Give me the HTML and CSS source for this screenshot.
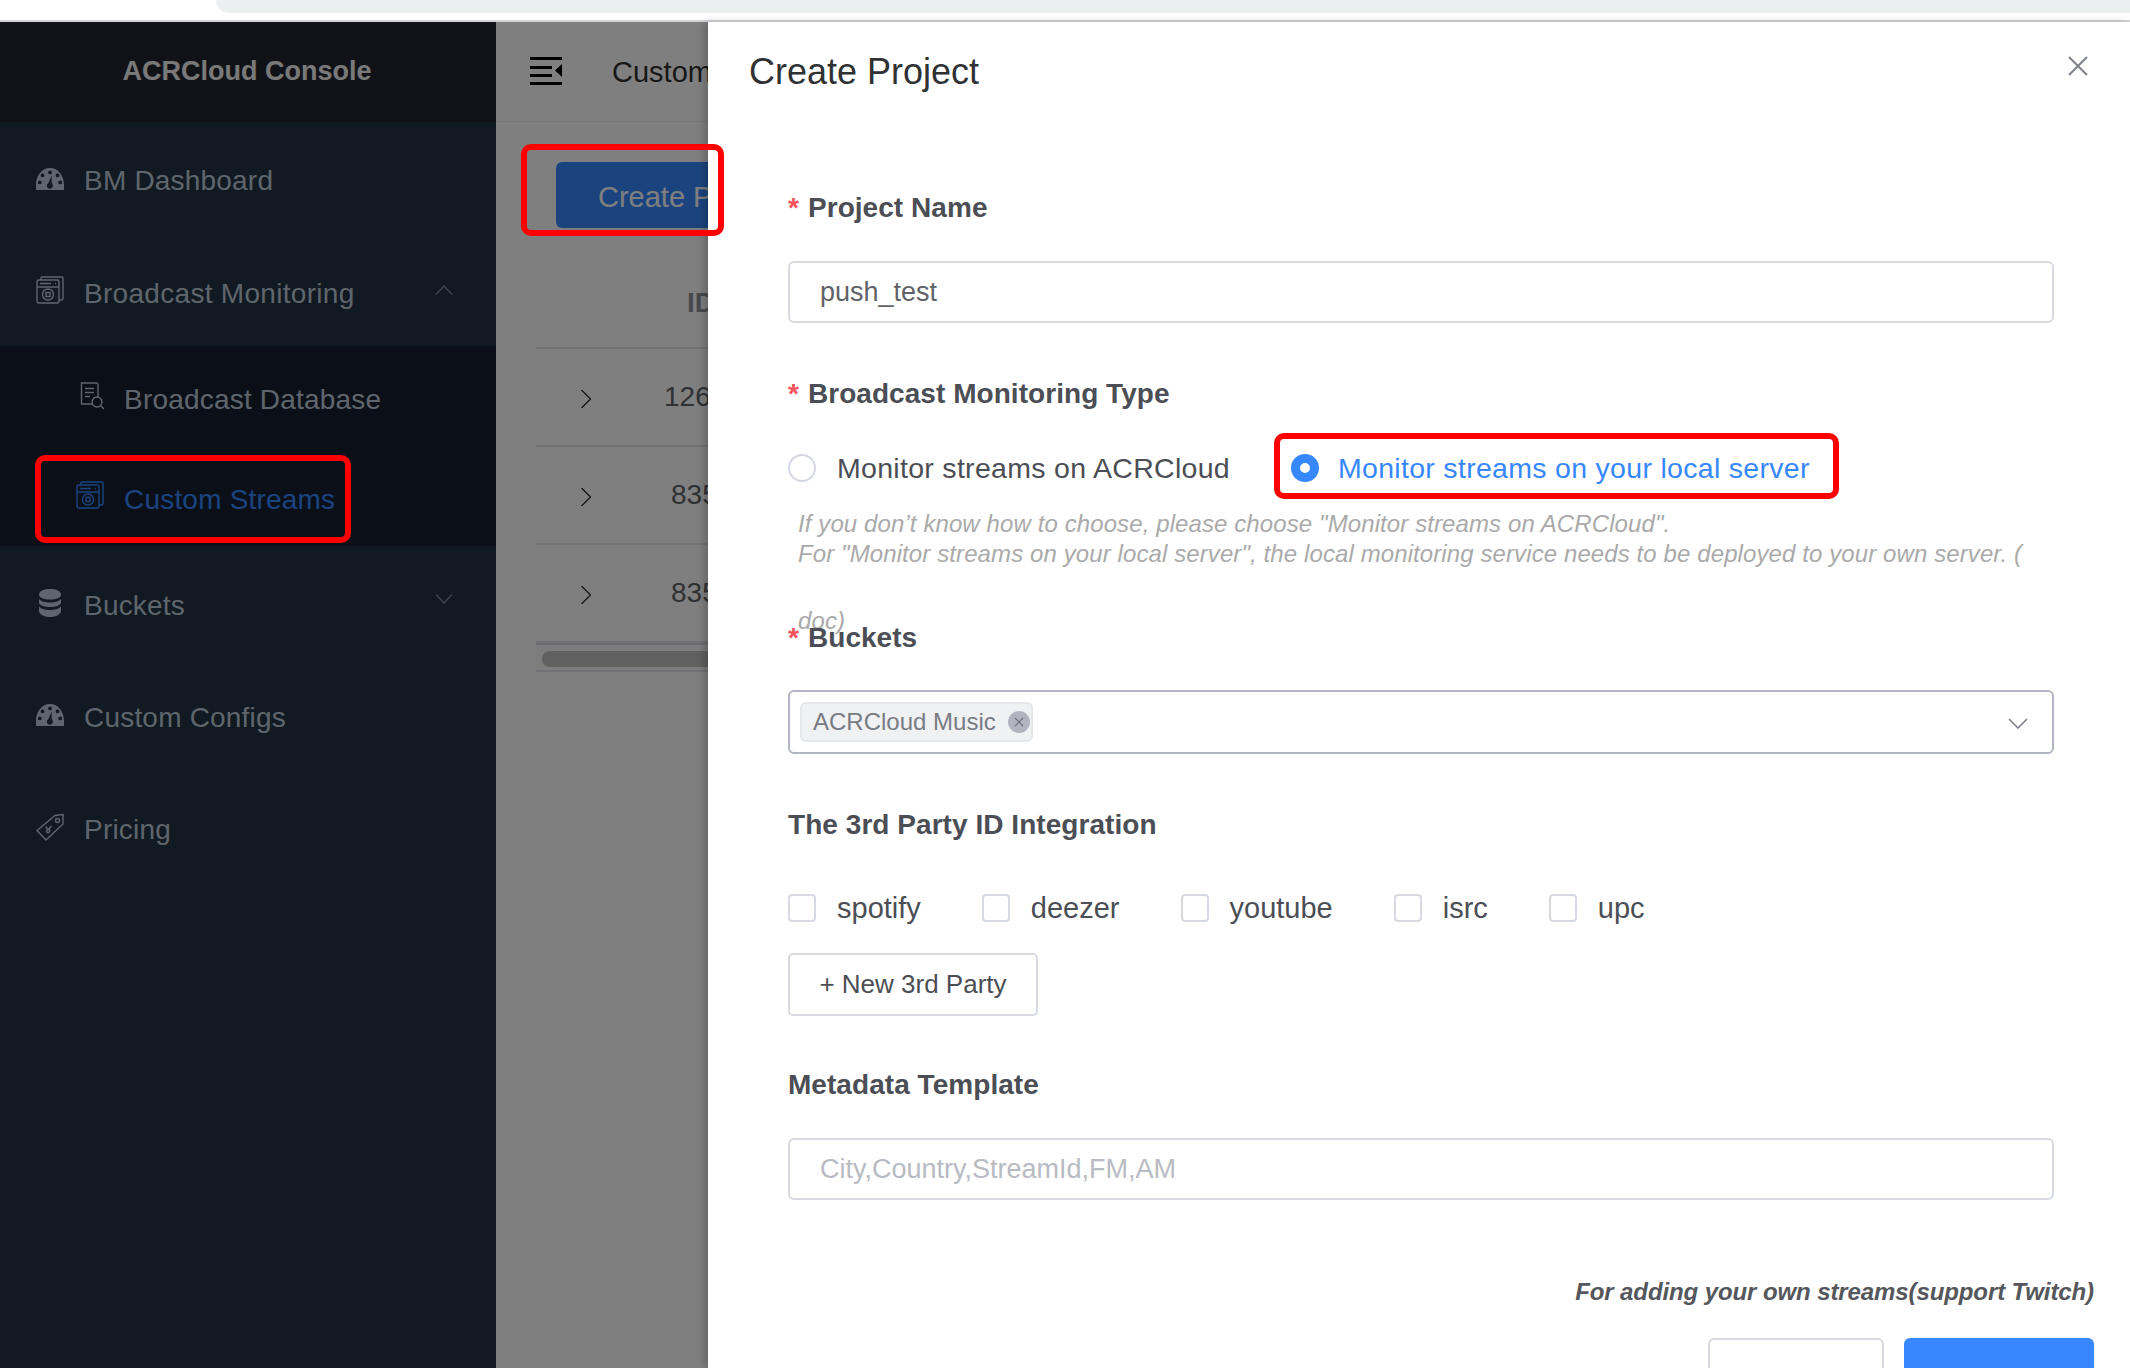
FILE: index.html
```html
<!doctype html>
<html>
<head>
<meta charset="utf-8">
<title>Create Project</title>
<link rel="stylesheet" href="styles.css">
</head>
<body>
<div class="topbar"><div class="addressbar"></div></div>
<div class="app">
  <aside class="sidebar">
    <div class="logo">ACRCloud Console</div>
    <ul class="menu">
      <li class="menu-item menu-item-first">
        <svg class="icon" viewBox="0 0 28 24"><use href="#gauge"/></svg>
        <span>BM Dashboard</span>
      </li>
      <li class="menu-item menu-item-open">
        <svg class="icon" viewBox="0 0 28 28"><use href="#stack"/></svg>
        <span>Broadcast Monitoring</span>
        <svg class="caret" viewBox="0 0 18 10"><path d="M1 9.500L9 1l8 8.500"/></svg>
      </li>
      <li class="submenu">
        <div class="submenu-item">
          <svg class="icon icon-sm" viewBox="0 0 24 28"><path d="M18 16V2.500a1.500 1.500 0 0 0-1.500-1.500h-15V22h11M5 6.500h9M5 10.500h9M5 14.500h5"/><circle cx="17" cy="20" r="5"/><path d="M21 24l3 3"/></svg>
          <span>Broadcast Database</span>
        </div>
        <div class="submenu-item active">
          <svg class="icon" viewBox="0 0 28 28"><use href="#stack"/></svg>
          <span>Custom Streams</span>
        </div>
      </li>
      <li class="menu-item">
        <svg class="icon" viewBox="0 0 28 28"><path class="solid" d="M3 5.500C3 2 8 0 14 0s11 2 11 5.500S20 10.500 14 10.500 3 9 3 5.500zM3 10C5 12.500 9.500 13.500 14 13.500s9-1 11-3.500v3.500c0 2.500-5 4.500-11 4.500S3 16 3 13.500zM3 17.500c2 2.500 6.500 3.500 11 3.500s9-1 11-3.500v4C25 25.500 20 28 14 28S3 25.500 3 21.500z"/></svg>
        <span>Buckets</span>
        <svg class="caret" viewBox="0 0 18 10"><path d="M1 .5L9 9l8-8.500"/></svg>
      </li>
      <li class="menu-item">
        <svg class="icon" viewBox="0 0 28 24"><use href="#gauge"/></svg>
        <span>Custom Configs</span>
      </li>
      <li class="menu-item">
        <svg class="icon" viewBox="0 0 28 28"><path d="M19 2.500l8-1v9.500L10 27 1 17.500z"/><circle cx="21.500" cy="7.500" r="2"/><path d="M15.500 13l-5.500 6M11 13.500c-1.500 1 -1 2.500.5 2.500s3 .5 2 2.500-2.500 1-3 .5"/></svg>
        <span>Pricing</span>
      </li>
    </ul>
  </aside>
  <main class="main">
    <div class="main-header">
      <svg class="hamburger" viewBox="0 0 32 28"><path d="M0 0h32v3H0zM0 9h22v3H0zM0 17h22v3H0zM0 25h32v3H0zM32 7v13l-7-6.500z"/></svg>
      <span class="crumb">Custom Streams</span>
    </div>
    <div class="main-body">
      <button class="create-btn">Create Project</button>
      <div class="table">
        <div class="table-head">ID</div>
        <div class="table-row">
          <svg class="row-caret" viewBox="0 0 10 18"><path d="M.5 0l9 9-9 9"/></svg><span class="cell cell-first">126</span>
        </div>
        <div class="table-row">
          <svg class="row-caret" viewBox="0 0 10 18"><path d="M.5 0l9 9-9 9"/></svg><span class="cell">835</span>
        </div>
        <div class="table-row">
          <svg class="row-caret" viewBox="0 0 10 18"><path d="M.5 0l9 9-9 9"/></svg><span class="cell">835</span>
        </div>
        <div class="table-scroll"><div class="scroll-thumb"></div></div>
      </div>
    </div>
  </main>
</div>

<div class="mask"></div>

<section class="drawer">
  <header class="drawer-header">
    <h2>Create Project</h2>
    <svg class="close" viewBox="0 0 20 20"><path d="M1 1l18 18M19 1L1 19"/></svg>
  </header>
  <form class="form">
    <div class="field">
      <label class="label required">Project Name</label>
      <div class="input">push_test</div>
    </div>
    <div class="field field-type">
      <label class="label required">Broadcast Monitoring Type</label>
      <div class="radios">
        <span class="radio"><i class="radio-dot"></i>Monitor streams on ACRCloud</span>
        <span class="radio radio-on"><i class="radio-dot"></i>Monitor streams on your local server</span>
      </div>
      <div class="help">
        If you don’t know how to choose, please choose "Monitor streams on ACRCloud".<br>
        For "Monitor streams on your local server", the local monitoring service needs to be deployed to your own server. (
        <span class="help-doc">doc)</span>
      </div>
    </div>
    <div class="field">
      <label class="label required">Buckets</label>
      <div class="input select">
        <span class="tag">ACRCloud Music<i class="tag-x"><svg viewBox="0 0 10 10"><path d="M1 1l8 8M9 1L1 9"/></svg></i></span>
        <svg class="select-caret" viewBox="0 0 20 11"><path d="M1 1l9 9 9-9"/></svg>
      </div>
    </div>
    <div class="field field-third">
      <label class="label">The 3rd Party ID Integration</label>
      <div class="checks">
        <span class="check"><i class="check-box"></i>spotify</span>
        <span class="check"><i class="check-box"></i>deezer</span>
        <span class="check"><i class="check-box"></i>youtube</span>
        <span class="check"><i class="check-box"></i>isrc</span>
        <span class="check"><i class="check-box"></i>upc</span>
      </div>
      <button type="button" class="btn-new">+ New 3rd Party</button>
    </div>
    <div class="field">
      <label class="label">Metadata Template</label>
      <div class="input placeholder">City,Country,StreamId,FM,AM</div>
    </div>
  </form>
  <footer class="drawer-footer">
    <p class="note">For adding your own streams(support Twitch)</p>
    <div class="actions">
      <button type="button" class="btn">Cancel</button>
      <button type="button" class="btn btn-primary">Submit</button>
    </div>
  </footer>
</section>

<!-- red marks drawn on top of the screenshot -->
<div class="mark mark-stream"></div>
<div class="mark mark-create"></div>
<div class="mark mark-radio"></div>

<svg class="defs" width="0" height="0">
  <defs>
    <g id="gauge">
      <path class="solid" fill-rule="evenodd" d="M0 23V18C0 8.500 6 1 14 1s14 7.500 14 17v5zM14 3.500a1.900 1.900 0 1 0 0 3.800 1.900 1.900 0 0 0 0-3.800zM6.500 6.500a1.900 1.900 0 1 0 0 3.800 1.900 1.900 0 0 0 0-3.800zM21.500 6.500a1.900 1.900 0 1 0 0 3.800 1.900 1.900 0 0 0 0-3.800zM3.800 13.500a1.900 1.900 0 1 0 0 3.800 1.900 1.900 0 0 0 0-3.800zM24.200 13.500a1.900 1.900 0 1 0 0 3.800 1.900 1.900 0 0 0 0-3.800zM15.500 8.500L12.500 16a3 3 0 1 0 3.200.3z"/>
    </g>
    <g id="stack">
      <path d="M5 4V2a1 1 0 0 1 1-1h20a1 1 0 0 1 1 1v20a2 2 0 0 1-2 2h-2"/>
      <rect x="1" y="4" width="22" height="23" rx="2"/>
      <path d="M1 11h22M4 7.500h11M19 7.500h1"/>
      <circle cx="12" cy="18.500" r="5.500"/>
      <rect x="10" y="16.500" width="4" height="4"/>
    </g>
  </defs>
</svg>
</body>
</html>
```
FILE: styles.css
```css
* {
    box-sizing: border-box;
}
html,
body {
    margin: 0;
    padding: 0;
}
body {
    position: relative;
    width: 2130px;
    height: 1368px;
    overflow: hidden;
    background: #fff;
    font-family: "Liberation Sans", Arial, sans-serif;
    font-size: 28px;
    color: #4b4e55;
}
ul {
    list-style: none;
    margin: 0;
    padding: 0;
}
i {
    font-style: normal;
}
button {
    font-family: inherit;
    cursor: pointer;
}

/* browser strip */
.topbar {
    height: 22px;
    padding-left: 216px;
    background: #fff;
    border-bottom: 2px solid #d3d5da;
}
.addressbar {
    height: 13px;
    background: #ebeff0;
    border-bottom-left-radius: 24px;
}

.app {
    display: flex;
    height: 1346px;
}

/* sidebar */
.sidebar {
    width: 496px;
    flex: none;
    background: #223246;
    color: #bfcbd9;
}
.logo {
    height: 100px;
    line-height: 98px;
    padding-right: 2px;
    background: #22242e;
    color: #f2f2f2;
    text-align: center;
    font-weight: bold;
    font-size: 27px;
}
.menu {
    padding-top: 3px;
}
.menu-item {
    display: flex;
    align-items: center;
    height: 112px;
    padding: 5px 0 0 36px;
    position: relative;
}
.menu-item-first {
    padding-top: 0;
}
.menu-item-open {
    height: 109px;
    padding-top: 0;
}
.menu-item span,
.submenu-item span {
    margin-left: 20px;
    margin-top: 3px;
    letter-spacing: .2px;
}
.menu-item-first span {
    margin-top: 0;
}
.menu-item-open span {
    margin-top: 4px;
    letter-spacing: .3px;
}
.submenu {
    background: #162030;
}
.submenu-item {
    display: flex;
    align-items: center;
    height: 100px;
    padding: 2px 0 0 76px;
}
.submenu-item span {
    margin-top: 5px;
}
.submenu-item.active {
    color: #3788ff;
}
.icon {
    width: 28px;
    height: 28px;
    margin-top: -4px;
    flex: none;
    fill: none;
    stroke: currentColor;
    stroke-width: 1.4;
}
.icon-sm {
    width: 24px;
    height: 28px;
    margin-left: 4px;
    margin-top: -2px;
}
.solid {
    fill: currentColor;
    stroke: none;
}
.caret {
    position: absolute;
    left: 435px;
    top: 48px;
    width: 18px;
    height: 10px;
    fill: none;
    stroke: #bfcbd9;
    stroke-opacity: .6;
    stroke-width: 1.2;
}

/* page behind the drawer */
.main {
    flex: 1;
    background: #fff;
}
.main-header {
    display: flex;
    align-items: center;
    height: 100px;
    padding-left: 34px;
    border-bottom: 1px solid #f0f0f0;
    color: #303133;
}
.hamburger {
    width: 32px;
    height: 28px;
    margin-top: -1px;
    fill: #000;
}
.crumb {
    margin: 2px 0 0 50px;
    font-size: 29px;
}
.main-body {
    padding: 40px 0 0 40px;
}
.create-btn {
    display: block;
    width: 300px;
    height: 66px;
    margin-left: 20px;
    padding: 5px 0 0 42px;
    border: 0;
    border-radius: 6px;
    background: #3788ff;
    color: #fff;
    font-size: 29px;
    text-align: left;
}
.table {
    width: 600px;
}
.table-head {
    height: 121px;
    padding: 57px 0 0 151px;
    line-height: 36px;
    font-weight: bold;
    color: #909399;
    border-bottom: 2px solid #e2e4ec;
}
.table-row {
    display: flex;
    align-items: center;
    height: 98px;
    padding-left: 45px;
    color: #606266;
    border-bottom: 2px solid #e2e4ec;
}
.row-caret {
    width: 10px;
    height: 18px;
    margin-top: 4px;
    fill: none;
    stroke: #303133;
    stroke-width: 1.4;
}
.cell {
    margin-left: 80px;
}
.cell-first {
    margin-left: 73px;
}
.table-scroll {
    height: 29px;
    padding: 6px 0 0 6px;
    background: #fafafa;
    border-top: 2px solid #d8dae3;
    border-bottom: 2px solid #e2e4ec;
}
.scroll-thumb {
    height: 16px;
    border-radius: 8px;
    background: #c0c0c0;
}

.mask {
    position: absolute;
    left: 0;
    right: 0;
    top: 22px;
    bottom: 0;
    background: rgba(0, 0, 0, .5);
}

/* drawer */
.drawer {
    position: absolute;
    left: 708px;
    right: 0;
    top: 22px;
    bottom: 0;
    background: #fff;
    box-shadow: -4px 0 8px rgba(0, 0, 0, .2);
}
.drawer-header {
    position: relative;
    height: 98px;
    padding: 29px 0 0 41px;
}
.drawer-header h2 {
    margin: 0;
    font-size: 36px;
    line-height: 42px;
    font-weight: normal;
    color: #303133;
}
.close {
    position: absolute;
    right: 42px;
    top: 34px;
    width: 20px;
    height: 20px;
    fill: none;
    stroke: #7d8088;
    stroke-width: 2;
}
.form {
    padding: 68px 76px 0 80px;
}
.field {
    margin-bottom: 51px;
}
.field-type {
    margin-bottom: 50px;
}
.field-third {
    margin-bottom: 49px;
}
.label {
    display: block;
    height: 40px;
    line-height: 40px;
    margin-bottom: 33px;
    font-weight: bold;
    letter-spacing: .05px;
    color: #4b4e55;
}
.label.required::before {
    content: "*";
    color: #f5545c;
    margin-right: 9px;
}
.input {
    height: 62px;
    line-height: 58px;
    padding: 0 30px;
    border: 2px solid #d8dae3;
    border-radius: 6px;
    color: #5f6268;
    font-size: 27px;
}
.placeholder {
    color: #b8bbc2;
}
.select {
    position: relative;
    display: flex;
    align-items: center;
    height: 64px;
    margin-top: -1px;
    padding: 0 10px;
    border-color: #b1b5c0;
}
.tag {
    display: flex;
    align-items: center;
    height: 40px;
    padding: 0 1px 0 11px;
    background: #f0f1f3;
    border: 2px solid #e6e7eb;
    border-radius: 6px;
    color: #797c84;
    font-size: 24px;
    line-height: 36px;
}
.tag-x {
    width: 22px;
    height: 22px;
    margin-left: 12px;
    border-radius: 50%;
    background: #b1b4bf;
    display: flex;
    align-items: center;
    justify-content: center;
}
.tag-x svg {
    width: 10px;
    height: 10px;
    fill: none;
    stroke: #6d7079;
    stroke-width: 1.2;
}
.select-caret {
    position: absolute;
    right: 24px;
    top: 26px;
    width: 20px;
    height: 11px;
    fill: none;
    stroke: #7d8088;
    stroke-width: 1.6;
}
.radios {
    display: flex;
    height: 62px;
    align-items: center;
    margin-top: -10px;
}
.radio {
    display: flex;
    align-items: center;
    margin-right: 61px;
    font-size: 28.5px;
    letter-spacing: .3px;
}
.radio-dot {
    width: 28px;
    height: 28px;
    margin-right: 21px;
    border: 2px solid #d5d8e3;
    border-radius: 50%;
}
.radio-on {
    color: #3788ff;
}
.radio-on .radio-dot {
    border: 9px solid #3788ff;
    background: #fff;
    margin-right: 19px;
}
.help {
    height: 59px;
    margin: 10px 0 0 10px;
    font-size: 24px;
    line-height: 30px;
    letter-spacing: .1px;
    font-style: italic;
    color: #aaa;
    white-space: nowrap;
}
.help-doc {
    display: block;
    margin-top: 37px;
}
.checks {
    display: flex;
    align-items: center;
    gap: 61px;
    height: 28px;
    margin-top: 49px;
    font-size: 29px;
}
.check {
    display: flex;
    align-items: center;
}
.check-box {
    width: 28px;
    height: 28px;
    margin-right: 21px;
    border: 2px solid #d8dae3;
    border-radius: 4px;
}
.btn-new {
    display: block;
    width: 250px;
    height: 63px;
    margin-top: 31px;
    padding: 0;
    background: #fff;
    border: 2px solid #d8dae3;
    border-radius: 5px;
    color: #4b4e55;
    font-size: 26px;
}
.drawer-footer {
    position: absolute;
    left: 0;
    right: 36px;
    top: 1250px;
    text-align: right;
}
.note {
    margin: 0 0 26px;
    font-size: 24px;
    line-height: 40px;
    letter-spacing: -.1px;
    font-weight: bold;
    font-style: italic;
    color: #55575c;
}
.actions {
    display: flex;
    justify-content: flex-end;
    gap: 20px;
}
.btn {
    width: 176px;
    height: 86px;
    padding: 0;
    background: #fff;
    border: 2px solid #d8dae3;
    border-radius: 6px;
    font-size: 28px;
    color: #4b4e55;
}
.btn-primary {
    width: 190px;
    background: #3788ff;
    border-color: #3788ff;
    color: #fff;
}

/* annotation boxes */
.mark {
    position: absolute;
    border: 6px solid #f00;
    border-radius: 10px;
}
.mark-stream {
    left: 35px;
    top: 455px;
    width: 316px;
    height: 88px;
}
.mark-create {
    left: 521px;
    top: 144px;
    width: 203px;
    height: 92px;
}
.mark-radio {
    left: 1274px;
    top: 433px;
    width: 565px;
    height: 66px;
}
.defs {
    position: absolute;
}
```
